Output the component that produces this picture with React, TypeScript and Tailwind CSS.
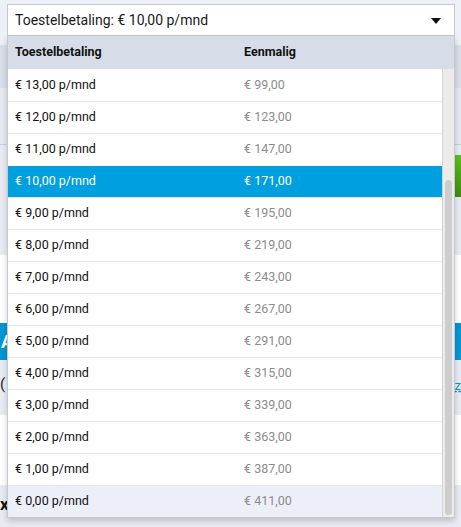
import { useState } from 'react';

const ROWS = [
  { month: '€ 13,00 p/mnd', once: '€ 99,00' },
  { month: '€ 12,00 p/mnd', once: '€ 123,00' },
  { month: '€ 11,00 p/mnd', once: '€ 147,00' },
  { month: '€ 10,00 p/mnd', once: '€ 171,00' },
  { month: '€ 9,00 p/mnd', once: '€ 195,00' },
  { month: '€ 8,00 p/mnd', once: '€ 219,00' },
  { month: '€ 7,00 p/mnd', once: '€ 243,00' },
  { month: '€ 6,00 p/mnd', once: '€ 267,00' },
  { month: '€ 5,00 p/mnd', once: '€ 291,00' },
  { month: '€ 4,00 p/mnd', once: '€ 315,00' },
  { month: '€ 3,00 p/mnd', once: '€ 339,00' },
  { month: '€ 2,00 p/mnd', once: '€ 363,00' },
  { month: '€ 1,00 p/mnd', once: '€ 387,00' },
  { month: '€ 0,00 p/mnd', once: '€ 411,00' },
];

const SELECTED = 3;
const HOVER = 13;

export default function App() {
  const [open] = useState(true);

  return (
    <div className="relative w-[461px] h-[527px] overflow-hidden bg-[#eef0f7] font-['Roboto',sans-serif]">
      {/* page content behind the dropdown */}
      <div className="flex flex-col">
        <div className="h-[45px]" />
        <div className="h-[43px] bg-[#d9dee9]" />
        <div className="h-[57px] bg-[#e6e9f2] border-b border-[#c9ced8]" />
        <div className="h-[110px] bg-[#e8ebf3] flex justify-end pt-[10px]">
          <div className="w-[8px] h-[42px] bg-gradient-to-b from-[#5cbf1a] to-[#3f8e0c]" />
        </div>
        <div className="h-[68px] bg-white" />
        <div className="h-[37px] bg-[#0096d6] flex justify-between items-center text-white font-bold text-[18px] pl-[1px]">
          <span>A</span>
        </div>
        <div className="h-[55px] bg-[#e8ebf3] flex justify-between items-center text-[15px] text-[#222]">
          <span className="-mt-[6px]">(</span>
          <span className="text-[#0096d6] underline decoration-dashed -mt-[4px] text-[13px]">z</span>
        </div>
        <div className="h-[70px] bg-white" />
        <div className="h-[42px] bg-[#e8ebf3] flex items-center font-bold text-[17px] text-[#111]">
          <span className="-mt-[2px]">x.</span>
        </div>
      </div>

      {/* select */}
      <div className="absolute left-[7px] top-[4px] w-[448px]">
        <div className="h-[32px] bg-white border border-[#c6c9cf] flex items-center justify-between pl-[7px] pr-[13px] pt-[1px] text-[14px] text-[#1a1a1a]">
          <span>Toestelbetaling: € 10,00 p/mnd</span>
          <svg width="10" height="6" viewBox="0 0 10 6">
            <path d="M0 0 H10 L5 6 Z" fill="#111" />
          </svg>
        </div>

        {open && (
          <div className="bg-white border border-t-0 border-[#c6c9cf] shadow-[0_3px_6px_rgba(0,0,0,0.18)]">
            <div className="h-[33px] bg-[#d7dde8] flex items-center text-[12.5px] font-bold text-[#111]">
              <span className="w-[236px] pl-[7px]">Toestelbetaling</span>
              <span>Eenmalig</span>
            </div>
            <div className="flex">
              <ul className="flex-1">
                {ROWS.map((r, i) => {
                  const sel = i === SELECTED;
                  const hov = i === HOVER;
                  return (
                    <li
                      key={r.month}
                      className={
                        'h-[32px] flex items-center text-[12.5px] border-t ' +
                        (sel
                          ? 'bg-[#009fdf] text-white border-white'
                          : hov
                          ? 'bg-[#eceff7] border-[#e6e6e6]'
                          : 'bg-white ' + (i === 0 ? 'border-white' : 'border-[#e6e6e6]'))
                      }
                    >
                      <span className={'w-[236px] pl-[7px] ' + (sel ? '' : 'text-[#111]')}>{r.month}</span>
                      <span className={sel ? 'text-white' : 'text-[#8c8c8c]'}>{r.once}</span>
                    </li>
                  );
                })}
              </ul>
              <div className="w-[12px] bg-[#edebe9] border-l border-[#d6d4d2] flex flex-col px-[2px]">
                <div className="h-[111px]" />
                <div className="flex-1 mb-[2px] rounded-full bg-[#cdcdcd]" />
              </div>
            </div>
          </div>
        )}
      </div>
    </div>
  );
}
